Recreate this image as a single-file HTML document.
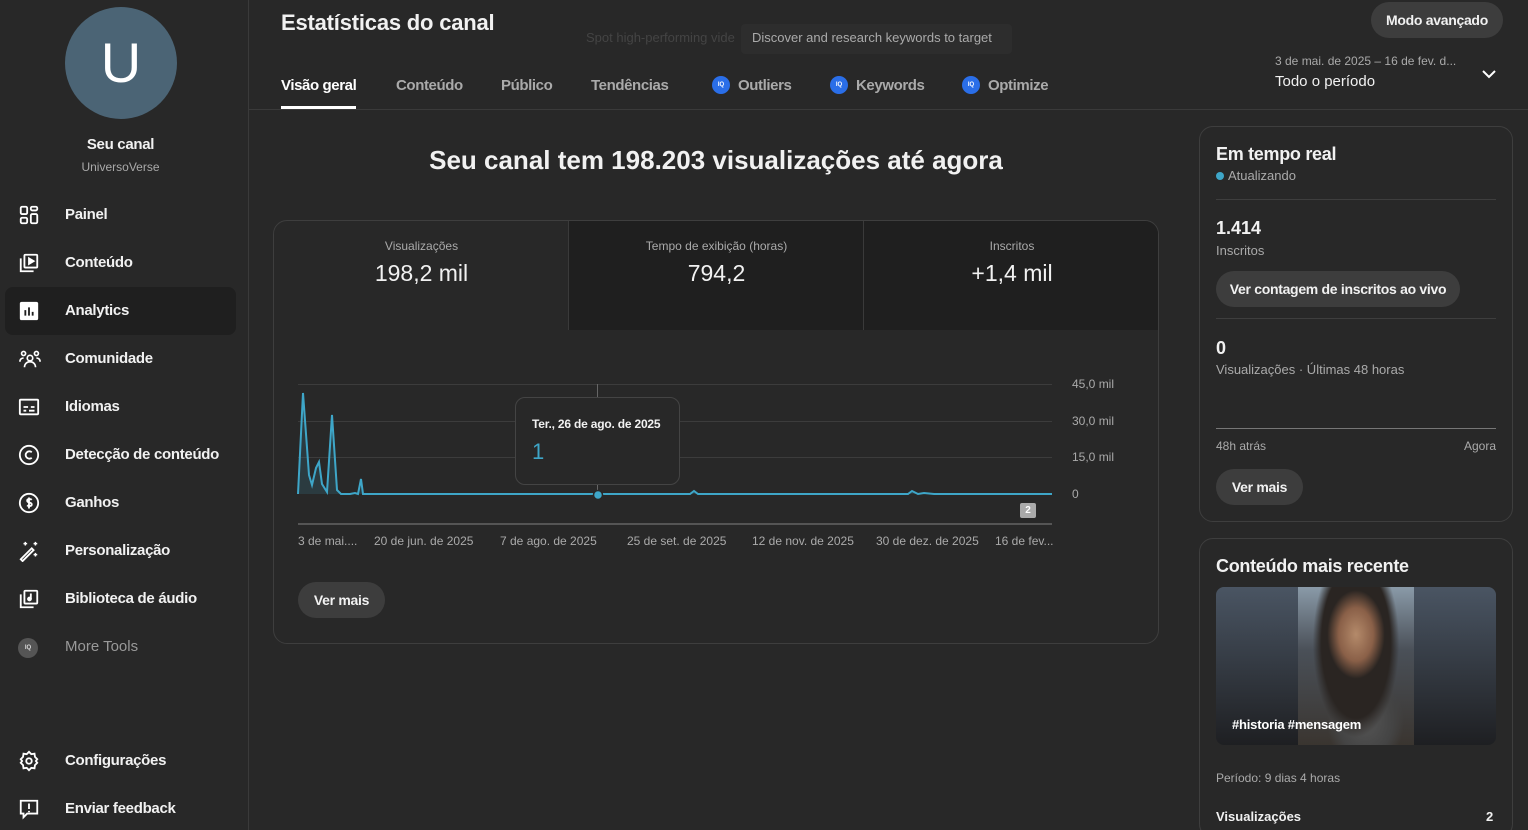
<!DOCTYPE html>
<html style="width:1528px;height:830px;overflow:hidden"><head><meta charset="utf-8">
<style>
*{box-sizing:border-box;margin:0;padding:0}
body{width:1528px;height:830px;overflow:hidden;background:#282828;font-family:"Liberation Sans",Arial,sans-serif;color:#f1f1f1;position:relative}
.abs{position:absolute}
.side{position:absolute;left:0;top:0;width:249px;height:830px;border-right:1px solid #3a3a3a}
.avatar{position:absolute;left:65px;top:7px;width:112px;height:112px;border-radius:50%;background:#4b6475;color:#fff;font-size:56px;text-align:center;line-height:112px}
.nav{position:absolute;left:5px;width:231px;height:48px;border-radius:8px;font-size:15px;font-weight:bold;color:#f1f1f1;letter-spacing:-0.3px}
.nav span{position:absolute;left:60px;top:15px}
.nav svg{position:absolute;left:13px;top:13px}
.sel{background:#1f1f1f}
.tab{position:absolute;top:76px;font-size:15px;color:#aaa;font-weight:bold;letter-spacing:-0.4px;display:flex;align-items:center;height:18px}
.iq{display:inline-block;width:18px;height:18px;border-radius:50%;background:#2a6ee8;margin-right:8px;font-size:6px;color:#fff;text-align:center;line-height:18px;font-weight:bold;letter-spacing:0}
.btn{position:absolute;background:#3d3d3d;border-radius:18px;font-size:14px;font-weight:bold;color:#f1f1f1;text-align:center;letter-spacing:-0.3px}
.card{position:absolute;border:1px solid #3e3e3e;border-radius:14px;background:#282828}
.lbl{font-size:12px;color:#aaa}
.gl{position:absolute;left:298px;width:754px;height:1px;background:#3c3c3c}
.yl{position:absolute;left:1072px;font-size:12px;color:#aaa}
.xl{position:absolute;top:534px;font-size:12px;color:#aaa}
</style></head><body>
<div class="side">
<div class="avatar">U</div>
<div class="abs" style="left:0;width:241px;top:136px;text-align:center;font-size:15px;font-weight:bold;letter-spacing:-0.3px">Seu canal</div>
<div class="abs" style="left:0;width:241px;top:160px;text-align:center;font-size:12px;color:#aaa">UniversoVerse</div>

<div class="nav" style="top:191px"><svg width="22" height="22" viewBox="0 0 24 24" fill="none" stroke="#fff" stroke-width="2"><rect x="3" y="3" width="7" height="8" rx="1.5"/><rect x="14" y="3" width="7" height="4" rx="1.5"/><rect x="3" y="15" width="7" height="6" rx="1.5"/><rect x="14" y="11" width="7" height="10" rx="1.5"/></svg><span>Painel</span></div>
<div class="nav" style="top:239px"><svg width="22" height="22" viewBox="0 0 24 24" fill="none" stroke="#fff" stroke-width="2"><rect x="7" y="3" width="14" height="14" rx="1"/><path d="M3 7v14h14"/><path d="M12 7l5 3-5 3z" fill="#fff"/></svg><span>Conteúdo</span></div>
<div class="nav sel" style="top:287px"><svg width="22" height="22" viewBox="0 0 24 24"><rect x="2" y="2" width="20" height="20" rx="2" fill="#fff"/><path d="M8 17v-6M12 17V8M16 17v-4" stroke="#1f1f1f" stroke-width="2"/></svg><span>Analytics</span></div>
<div class="nav" style="top:335px"><svg width="24" height="22" viewBox="0 0 24 24" fill="none" stroke="#fff" stroke-width="1.8"><circle cx="12" cy="11" r="3"/><circle cx="5" cy="6" r="2.2"/><circle cx="19" cy="6" r="2.2"/><path d="M6 21c0-4 3-6 6-6s6 2 6 6M1 15c0-3 2-4 4-4M23 15c0-3-2-4-4-4"/></svg><span>Comunidade</span></div>
<div class="nav" style="top:383px"><svg width="22" height="22" viewBox="0 0 24 24" fill="none" stroke="#fff" stroke-width="2"><rect x="2" y="4" width="20" height="16" rx="1"/><path d="M6 12h5M14 12h4M6 16h3M12 16h6"/></svg><span>Idiomas</span></div>
<div class="nav" style="top:431px"><svg width="22" height="22" viewBox="0 0 24 24" fill="none" stroke="#fff" stroke-width="2"><circle cx="12" cy="12" r="10"/><path d="M15 9a4 4 0 1 0 0 6"/></svg><span>Detecção de conteúdo</span></div>
<div class="nav" style="top:479px"><svg width="22" height="22" viewBox="0 0 24 24" fill="none" stroke="#fff" stroke-width="2"><circle cx="12" cy="12" r="10"/><path d="M15 8.5c-1-1-5-1.5-5 1s5 1.5 5 4-4 2-5 1M12 6v12"/></svg><span>Ganhos</span></div>
<div class="nav" style="top:527px"><svg width="22" height="22" viewBox="0 0 24 24" fill="none" stroke="#fff" stroke-width="2"><path d="M3 21L15 9l2 2L5 23z"/><path d="M8 2v4M6 4h4M19 2v4M17 4h4M19 14v4M17 16h4" stroke-width="1.6"/></svg><span>Personalização</span></div>
<div class="nav" style="top:575px"><svg width="22" height="22" viewBox="0 0 24 24" fill="none" stroke="#fff" stroke-width="2"><rect x="7" y="3" width="14" height="14" rx="1"/><path d="M3 7v14h14M14 6v6"/><circle cx="12.5" cy="12" r="1.6" fill="#fff"/></svg><span>Biblioteca de áudio</span></div>
<div class="nav" style="top:623px;color:#999;font-weight:normal;letter-spacing:0"><div class="abs" style="left:13px;top:15px;width:20px;height:20px;border-radius:50%;background:#555;font-size:6px;line-height:20px;text-align:center;color:#ddd;font-weight:bold">IQ</div><span>More Tools</span></div>
<div class="nav" style="top:737px"><svg width="22" height="22" viewBox="0 0 24 24" fill="none" stroke="#fff" stroke-width="2"><circle cx="12" cy="12" r="3"/><path d="M12 2l2.5 2.5 3.5-.5.5 3.5L21 10l-1.5 2 1.5 2-2.5 2.5-.5 3.5-3.5-.5L12 22l-2.5-2.5-3.5.5-.5-3.5L3 14l1.5-2L3 10l2.5-2.5L6 4l3.5.5z"/></svg><span>Configurações</span></div>
<div class="nav" style="top:785px"><svg width="22" height="22" viewBox="0 0 24 24" fill="none" stroke="#fff" stroke-width="2"><path d="M3 3h18v14H10l-4 4v-4H3z"/><path d="M12 6v6M12 14v1.5"/></svg><span>Enviar feedback</span></div>
</div>

<div class="abs" style="left:281px;top:10px;font-size:22px;font-weight:bold;letter-spacing:-0.2px">Estatísticas do canal</div>
<div class="abs" style="left:586px;top:30px;font-size:13px;color:#444">Spot high-performing vide</div>
<div class="abs" style="left:741px;top:24px;width:271px;height:30px;background:#2d2d2d;border-radius:4px;font-size:13px;color:#aaa;padding:6px 11px">Discover and research keywords to target</div>
<div class="tab" style="left:281px;color:#fff">Visão geral</div>
<div class="abs" style="left:281px;top:106px;width:75px;height:3px;background:#fff"></div>
<div class="tab" style="left:396px">Conteúdo</div>
<div class="tab" style="left:501px">Público</div>
<div class="tab" style="left:591px">Tendências</div>
<div class="tab" style="left:712px"><span class="iq">IQ</span>Outliers</div>
<div class="tab" style="left:830px"><span class="iq">IQ</span>Keywords</div>
<div class="tab" style="left:962px"><span class="iq">IQ</span>Optimize</div>
<div class="abs" style="left:249px;top:109px;width:1279px;height:1px;background:#3a3a3a"></div>

<div class="btn" style="left:1371px;top:2px;width:132px;height:36px;line-height:36px">Modo avançado</div>
<div class="abs" style="left:1275px;top:54px;font-size:12px;color:#aaa">3 de mai. de 2025 – 16 de fev. d...</div>
<div class="abs" style="left:1275px;top:73px;font-size:15px">Todo o período</div>
<svg class="abs" style="left:1480px;top:67px" width="18" height="14" viewBox="0 0 18 14"><path d="M3 4l6 6 6-6" stroke="#fff" stroke-width="2" fill="none"/></svg>

<div class="abs" style="left:273px;width:886px;top:145px;text-align:center;font-size:26px;font-weight:bold;letter-spacing:0">Seu canal tem 198.203 visualizações até agora</div>

<div class="card" style="left:273px;top:220px;width:886px;height:424px;overflow:hidden">
<div class="abs" style="left:295px;top:0;width:591px;height:109px;background:#1f1f1f"></div>
<div class="abs" style="left:589px;top:0;width:1px;height:109px;background:#3a3a3a"></div>
<div class="abs" style="left:294px;top:0;width:1px;height:109px;background:#3a3a3a"></div>
<div class="abs lbl" style="left:0;width:295px;top:18px;text-align:center">Visualizações</div>
<div class="abs" style="left:0;width:295px;top:39px;text-align:center;font-size:23px">198,2 mil</div>
<div class="abs lbl" style="left:295px;width:295px;top:18px;text-align:center">Tempo de exibição (horas)</div>
<div class="abs" style="left:295px;width:295px;top:39px;text-align:center;font-size:23px">794,2</div>
<div class="abs lbl" style="left:590px;width:296px;top:18px;text-align:center">Inscritos</div>
<div class="abs" style="left:590px;width:296px;top:39px;text-align:center;font-size:23px">+1,4 mil</div>
</div>

<div class="gl" style="top:384px"></div><div class="gl" style="top:421px"></div><div class="gl" style="top:457px"></div>
<div class="gl" style="top:523px;height:2px;background:#555"></div>
<div class="yl" style="top:377px">45,0 mil</div><div class="yl" style="top:414px">30,0 mil</div><div class="yl" style="top:450px">15,0 mil</div><div class="yl" style="top:487px">0</div>
<div class="abs" style="left:597px;top:384px;width:1px;height:110px;background:#666"></div>
<svg class="abs" style="left:0;top:0" width="1100" height="560">
<path d="M298 494 L303 393 L309 475 L312 485 L316 468 L319 462 L322 484 L327 492 L332 415 L337 490 L341 494 L350 494 L355 493 L358 494 L361 479 L363 494 L690 494 L694 491 L698 494 L908 494 L912 491 L918 494 L924 493 L934 494 L1052 494" fill="rgba(62,166,200,0.15)" stroke="#3ea6c8" stroke-width="2"/>
<circle cx="598" cy="495" r="4.5" fill="#3ea6c8" stroke="#282828" stroke-width="1.5"/>
</svg>
<div class="abs" style="left:1020px;top:503px;width:16px;height:15px;background:#aaa;border-radius:2px;font-size:10px;color:#fff;text-align:center;line-height:15px;font-weight:bold">2</div>
<div class="abs" style="left:515px;top:397px;width:165px;height:88px;background:#282828;border:1px solid #444;border-radius:10px">
<div class="abs" style="left:16px;top:19px;font-size:12px;font-weight:bold;letter-spacing:-0.2px">Ter., 26 de ago. de 2025</div>
<div class="abs" style="left:16px;top:41px;font-size:22px;color:#3ea6c8">1</div>
</div>
<div class="xl" style="left:298px">3 de mai....</div>
<div class="xl" style="left:374px">20 de jun. de 2025</div>
<div class="xl" style="left:500px">7 de ago. de 2025</div>
<div class="xl" style="left:627px">25 de set. de 2025</div>
<div class="xl" style="left:752px">12 de nov. de 2025</div>
<div class="xl" style="left:876px">30 de dez. de 2025</div>
<div class="xl" style="left:995px">16 de fev...</div>
<div class="btn" style="left:298px;top:582px;width:87px;height:36px;line-height:36px">Ver mais</div>

<div class="card" style="left:1199px;top:126px;width:314px;height:396px">
<div class="abs" style="left:16px;top:17px;font-size:18px;font-weight:bold;letter-spacing:-0.3px">Em tempo real</div>
<div class="abs" style="left:16px;top:41px;font-size:13px;color:#aaa"><span style="display:inline-block;width:8px;height:8px;border-radius:50%;background:#3ea6c8;margin-right:4px"></span>Atualizando</div>
<div class="abs" style="left:16px;top:72px;width:280px;height:1px;background:#3e3e3e"></div>
<div class="abs" style="left:16px;top:91px;font-size:18px;font-weight:bold">1.414</div>
<div class="abs" style="left:16px;top:116px;font-size:13px;color:#aaa">Inscritos</div>
<div class="btn" style="left:16px;top:144px;width:244px;height:36px;line-height:36px">Ver contagem de inscritos ao vivo</div>
<div class="abs" style="left:16px;top:191px;width:280px;height:1px;background:#3e3e3e"></div>
<div class="abs" style="left:16px;top:211px;font-size:18px;font-weight:bold">0</div>
<div class="abs" style="left:16px;top:235px;font-size:13px;color:#aaa">Visualizações · Últimas 48 horas</div>
<div class="abs" style="left:16px;top:301px;width:280px;height:1px;background:#777"></div>
<div class="abs" style="left:16px;top:312px;font-size:12px;color:#aaa">48h atrás</div>
<div class="abs" style="left:264px;top:312px;font-size:12px;color:#aaa">Agora</div>
<div class="btn" style="left:16px;top:342px;width:87px;height:36px;line-height:36px">Ver mais</div>
</div>

<div class="card" style="left:1199px;top:538px;width:314px;height:300px;overflow:hidden">
<div class="abs" style="left:16px;top:17px;font-size:18px;font-weight:bold;letter-spacing:-0.3px">Conteúdo mais recente</div>
<div class="abs" style="left:16px;top:48px;width:280px;height:158px;border-radius:8px;overflow:hidden;background:linear-gradient(#4a5563,#1e1f22)">
<div class="abs" style="left:82px;top:0;width:116px;height:158px;background:linear-gradient(#8a9aa8,#4a5058 40%,#3a3530)"></div>
<div class="abs" style="left:92px;top:0;width:96px;height:158px;background:radial-gradient(ellipse 30% 28% at 50% 30%,#b48a6a 0,#8a6048 60%,transparent 100%),radial-gradient(ellipse 45% 60% at 50% 35%,#2a2522 0,#2a2522 80%,transparent 100%),radial-gradient(ellipse 40% 30% at 60% 85%,#555 0,#444 70%,transparent 100%)"></div>
<div class="abs" style="left:16px;top:130px;font-size:13px;font-weight:bold;color:#fff;letter-spacing:-0.2px">#historia #mensagem</div>
</div>
<div class="abs" style="left:16px;top:232px;font-size:12px;color:#aaa">Período: 9 dias 4 horas</div>
<div class="abs" style="left:16px;top:270px;font-size:13px;font-weight:bold">Visualizações</div>
<div class="abs" style="left:286px;top:270px;font-size:13px;font-weight:bold">2</div>
</div>
</body></html>
